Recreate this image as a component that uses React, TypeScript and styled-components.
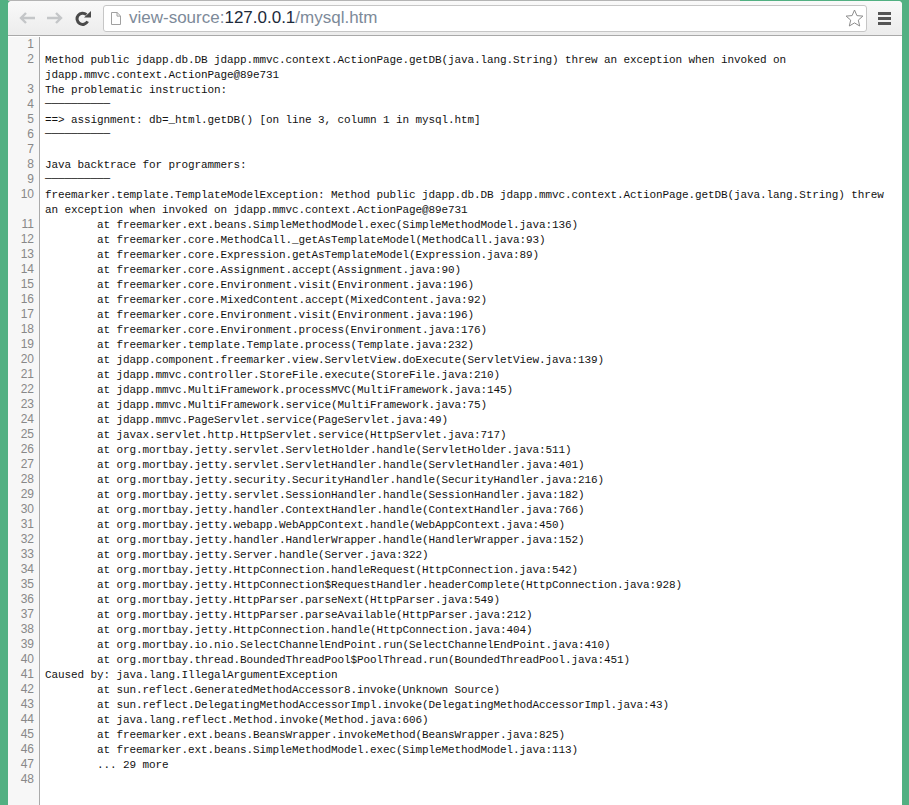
import React from "react";
import styled, { createGlobalStyle } from "styled-components";

const Global = createGlobalStyle`
  html, body { margin: 0; height: 100%; overflow: hidden; }
  body { background: #52b082; }
`;

const at = "        at ";
const rule = "——————————";

// each entry is one numbered line, a second item is its wrapped part
const lines: string[][] = [
  [""],
  [
    "Method public jdapp.db.DB jdapp.mmvc.context.ActionPage.getDB(java.lang.String) threw an exception when invoked on",
    "jdapp.mmvc.context.ActionPage@89e731",
  ],
  ["The problematic instruction:"],
  [rule],
  ["==> assignment: db=_html.getDB() [on line 3, column 1 in mysql.htm]"],
  [rule],
  [""],
  ["Java backtrace for programmers:"],
  [rule],
  [
    "freemarker.template.TemplateModelException: Method public jdapp.db.DB jdapp.mmvc.context.ActionPage.getDB(java.lang.String) threw",
    "an exception when invoked on jdapp.mmvc.context.ActionPage@89e731",
  ],
  [at + "freemarker.ext.beans.SimpleMethodModel.exec(SimpleMethodModel.java:136)"],
  [at + "freemarker.core.MethodCall._getAsTemplateModel(MethodCall.java:93)"],
  [at + "freemarker.core.Expression.getAsTemplateModel(Expression.java:89)"],
  [at + "freemarker.core.Assignment.accept(Assignment.java:90)"],
  [at + "freemarker.core.Environment.visit(Environment.java:196)"],
  [at + "freemarker.core.MixedContent.accept(MixedContent.java:92)"],
  [at + "freemarker.core.Environment.visit(Environment.java:196)"],
  [at + "freemarker.core.Environment.process(Environment.java:176)"],
  [at + "freemarker.template.Template.process(Template.java:232)"],
  [at + "jdapp.component.freemarker.view.ServletView.doExecute(ServletView.java:139)"],
  [at + "jdapp.mmvc.controller.StoreFile.execute(StoreFile.java:210)"],
  [at + "jdapp.mmvc.MultiFramework.processMVC(MultiFramework.java:145)"],
  [at + "jdapp.mmvc.MultiFramework.service(MultiFramework.java:75)"],
  [at + "jdapp.mmvc.PageServlet.service(PageServlet.java:49)"],
  [at + "javax.servlet.http.HttpServlet.service(HttpServlet.java:717)"],
  [at + "org.mortbay.jetty.servlet.ServletHolder.handle(ServletHolder.java:511)"],
  [at + "org.mortbay.jetty.servlet.ServletHandler.handle(ServletHandler.java:401)"],
  [at + "org.mortbay.jetty.security.SecurityHandler.handle(SecurityHandler.java:216)"],
  [at + "org.mortbay.jetty.servlet.SessionHandler.handle(SessionHandler.java:182)"],
  [at + "org.mortbay.jetty.handler.ContextHandler.handle(ContextHandler.java:766)"],
  [at + "org.mortbay.jetty.webapp.WebAppContext.handle(WebAppContext.java:450)"],
  [at + "org.mortbay.jetty.handler.HandlerWrapper.handle(HandlerWrapper.java:152)"],
  [at + "org.mortbay.jetty.Server.handle(Server.java:322)"],
  [at + "org.mortbay.jetty.HttpConnection.handleRequest(HttpConnection.java:542)"],
  [at + "org.mortbay.jetty.HttpConnection$RequestHandler.headerComplete(HttpConnection.java:928)"],
  [at + "org.mortbay.jetty.HttpParser.parseNext(HttpParser.java:549)"],
  [at + "org.mortbay.jetty.HttpParser.parseAvailable(HttpParser.java:212)"],
  [at + "org.mortbay.jetty.HttpConnection.handle(HttpConnection.java:404)"],
  [at + "org.mortbay.io.nio.SelectChannelEndPoint.run(SelectChannelEndPoint.java:410)"],
  [at + "org.mortbay.thread.BoundedThreadPool$PoolThread.run(BoundedThreadPool.java:451)"],
  ["Caused by: java.lang.IllegalArgumentException"],
  [at + "sun.reflect.GeneratedMethodAccessor8.invoke(Unknown Source)"],
  [at + "sun.reflect.DelegatingMethodAccessorImpl.invoke(DelegatingMethodAccessorImpl.java:43)"],
  [at + "java.lang.reflect.Method.invoke(Method.java:606)"],
  [at + "freemarker.ext.beans.BeansWrapper.invokeMethod(BeansWrapper.java:825)"],
  [at + "freemarker.ext.beans.SimpleMethodModel.exec(SimpleMethodModel.java:113)"],
  ["        ... 29 more"],
  [""],
];

const App = () => {
  return (
    <>
      <Global />
      <Desktop>
        <TabEdge />
        <Browser>
          <Toolbar>
            <NavButton>
              <svg width="16" height="12" viewBox="0 0 16 12" fill="none" stroke="currentColor" strokeWidth="2.4">
                <path d="M16 6H2M7 1L2 6l5 5" />
              </svg>
            </NavButton>
            <NavButton>
              <svg width="16" height="12" viewBox="0 0 16 12" fill="none" stroke="currentColor" strokeWidth="2.4">
                <path d="M0 6h14M9 1l5 5-5 5" />
              </svg>
            </NavButton>
            <Reload>
              <svg width="16" height="15" viewBox="0 0 16 15">
                <path d="M12.6 10.4A5.6 5.6 0 1 1 11.4 3.6" fill="none" stroke="currentColor" strokeWidth="3" />
                <path d="M9 6.6h7V0z" fill="currentColor" />
              </svg>
            </Reload>
            <Omnibox>
              <PageIcon>
                <svg width="10" height="13" viewBox="0 0 10 13" fill="#fff" stroke="currentColor">
                  <path d="M.5.5h5.6l3.4 3.4v8.6H.5zM6 .5v3.6h3.5" />
                </svg>
              </PageIcon>
              <Url>
                view-source:<b>127.0.0.1</b>/mysql.htm
              </Url>
              <Star>
                <svg width="19" height="18" viewBox="0 0 19 18" fill="#fff" stroke="currentColor">
                  <path d="M9.5 1l2.4 5.6 6 .5-4.6 4 1.4 5.9-5.2-3.1-5.2 3.1 1.4-5.9-4.6-4 6-.5z" />
                </svg>
              </Star>
            </Omnibox>
            <Menu>
              <span />
              <span />
              <span />
            </Menu>
          </Toolbar>
          <Source>
            {lines.map((line, i) => (
              <Row key={i}>
                <Num>{i + 1}</Num>
                <Code>
                  {line.map((part, j) => (
                    <CodeLine key={j} $rule={part === rule}>
                      {part || " "}
                    </CodeLine>
                  ))}
                </Code>
              </Row>
            ))}
            <Filler>
              <FillGutter />
            </Filler>
          </Source>
        </Browser>
      </Desktop>
    </>
  );
};

export default App;

const Desktop = styled.div`
  width: 909px;
  height: 805px;
  display: flex;
  flex-direction: column;
  padding: 0 7px 0 8px;
  box-sizing: border-box;
  overflow: hidden;
`;
const TabEdge = styled.div`
  height: 1px;
  width: 732px;
  flex: none;
  background: #b4b4b4;
`;
const Browser = styled.div`
  flex: 1;
  min-height: 0;
  display: flex;
  flex-direction: column;
  background: #fff;
  border-radius: 4px 4px 0 0;
  overflow: hidden;
`;
const Toolbar = styled.div`
  height: 35px;
  flex: none;
  box-sizing: border-box;
  display: flex;
  align-items: center;
  padding: 0 5px;
  background: linear-gradient(#f9f9f9, #ececec);
  border-bottom: 1px solid #a9a9a9;
`;
const NavButton = styled.div`
  width: 28px;
  height: 24px;
  display: flex;
  align-items: center;
  justify-content: center;
  color: #c4c6c8;
`;
const Reload = styled(NavButton)`
  color: #4a4a4a;
  margin-right: 6px;
`;
const Omnibox = styled.div`
  flex: 1;
  height: 27px;
  box-sizing: border-box;
  display: flex;
  align-items: center;
  background: #fff;
  border: 1px solid #c6c6c6;
  border-radius: 3px;
  padding: 0 2px 0 7px;
  margin-right: 4px;
`;
const PageIcon = styled.div`
  width: 15px;
  display: flex;
  color: #a0a0a0;
`;
const Url = styled.div`
  flex: 1;
  margin-left: 3px;
  font: 17px "Liberation Sans", Arial, sans-serif;
  color: #7d8a99;
  b {
    font-weight: 400;
    color: #1c2a3a;
  }
`;
const Star = styled.div`
  display: flex;
  color: #8c8c8c;
`;
const Menu = styled.div`
  width: 26px;
  display: flex;
  flex-direction: column;
  align-items: center;
  gap: 2px;
  span {
    width: 13px;
    height: 3px;
    background: #555;
  }
`;
const Source = styled.div`
  flex: 1;
  min-height: 0;
  display: flex;
  flex-direction: column;
  padding-top: 1px;
  overflow: hidden;
`;
const Row = styled.div`
  display: flex;
  flex: none;
`;
const Num = styled.div`
  width: 26px;
  flex: none;
  box-sizing: content-box;
  padding-right: 5px;
  text-align: right;
  background: #f7f7f7;
  border-right: 1px solid #aaa;
  font: 12px/15px "Liberation Sans", Arial, sans-serif;
  color: #888;
`;
const Code = styled.div`
  padding-left: 5px;
  min-width: 0;
`;
const CodeLine = styled.div<{ $rule?: boolean }>`
  height: 15px;
  font: 11px/${(p) => (p.$rule ? "13px" : "17px")} "Liberation Mono", "Courier New", monospace;
  letter-spacing: -0.1px;
  color: #111;
  white-space: pre;
`;
const Filler = styled.div`
  flex: 1;
  display: flex;
`;
const FillGutter = styled.div`
  width: 31px;
  background: #f7f7f7;
  border-right: 1px solid #aaa;
`;
